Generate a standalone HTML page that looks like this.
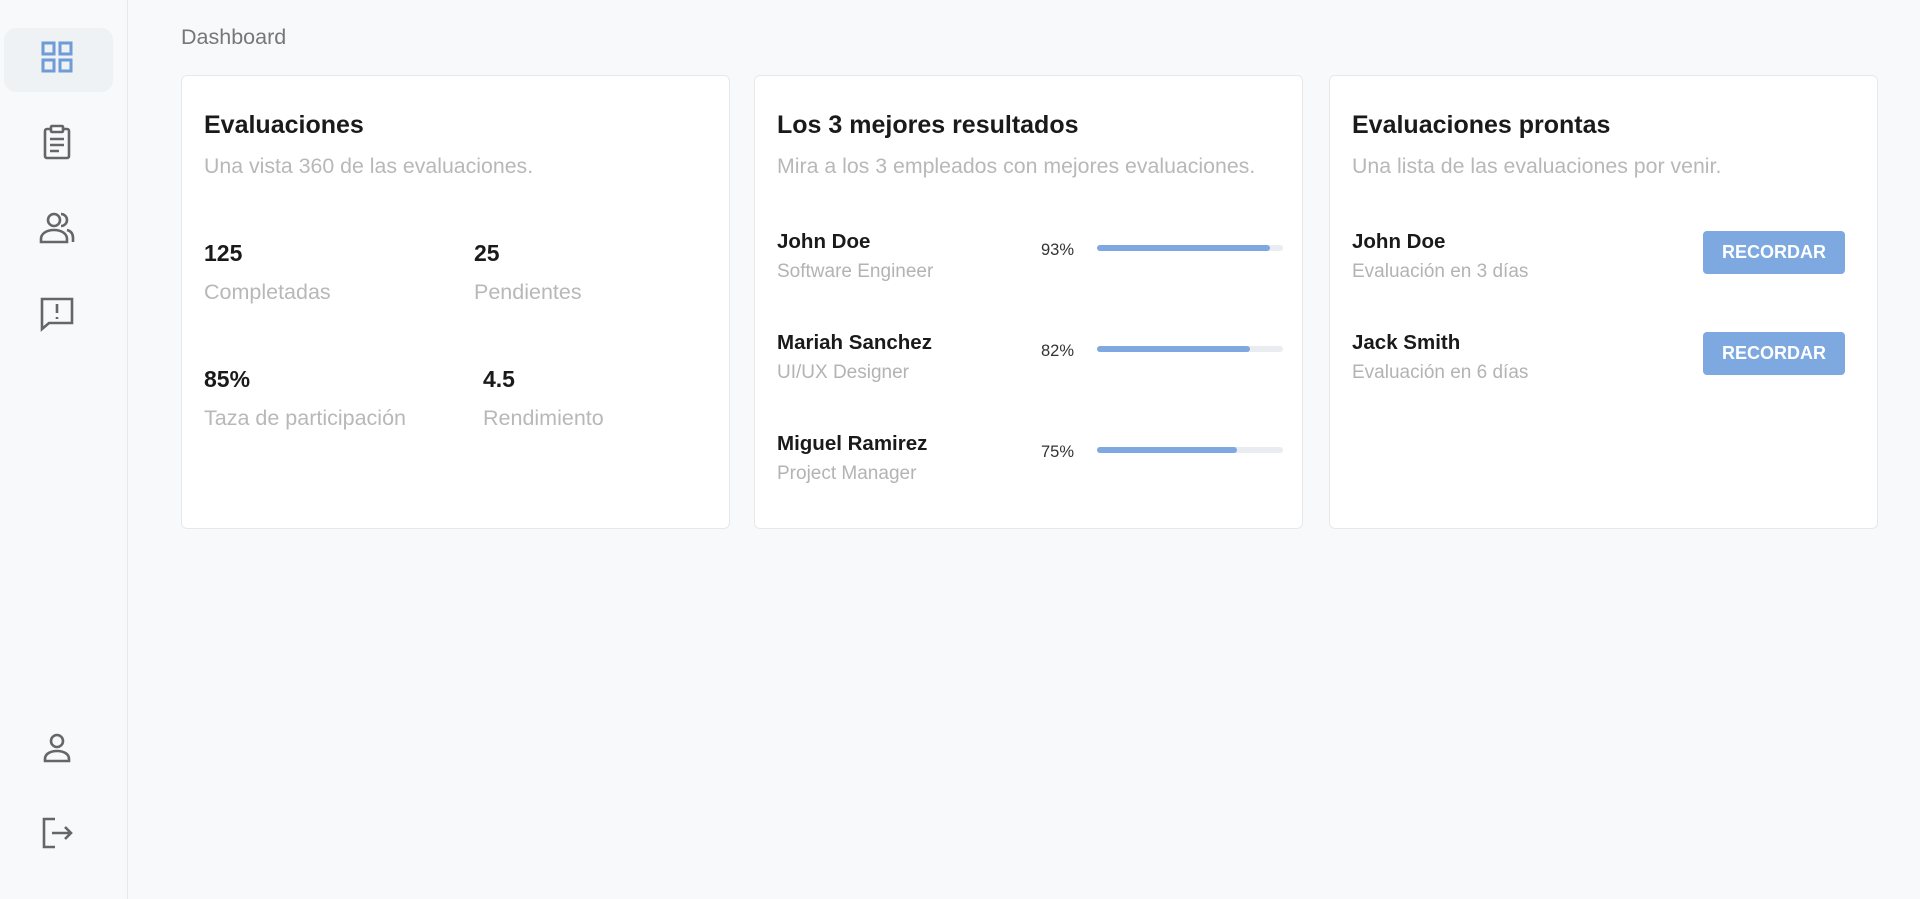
<!DOCTYPE html>
<html><head><meta charset="utf-8"><style>
*{box-sizing:border-box;margin:0;padding:0}
body{width:1920px;height:899px;background:#f7f9fa;font-family:"Liberation Sans",sans-serif;position:relative;overflow:hidden;color:#1a1a1a}
.side{position:absolute;left:0;top:0;width:128px;height:899px;background:#f7f9fa;border-right:1px solid #e6eaee}
.active{position:absolute;left:4px;top:28px;width:109px;height:64px;background:#eef2f5;border-radius:12px}
.ic{position:absolute;left:37px;width:40px;height:40px}
.crumb{position:absolute;left:181px;top:25px;font-size:21.5px;color:#777}
.card{position:absolute;top:75px;width:549px;height:454px;background:#fff;border:1px solid #e6e9ec;border-radius:6px}
.t{position:absolute;left:22px;top:35px;font-size:25px;font-weight:bold;color:#1a1a1a}
.s{position:absolute;left:22px;top:78px;font-size:21.3px;color:#b8b8b8}
.abs{position:absolute}
.num{font-size:23px;font-weight:bold}
.lab{font-size:21.5px;color:#b8b8b8}
.nm{font-size:20.5px;font-weight:bold}
.sub{font-size:19px;color:#b3b3b3}
.pct{font-size:16.5px;color:#333}
.bar{position:absolute;left:342px;width:186px;height:6px;background:#e9ecf0;border-radius:3px}
.bar i{display:block;height:6px;background:#7ea8df;border-radius:3px}
.btn{position:absolute;left:373px;width:142px;height:43px;background:#7ea8e0;border-radius:4px;color:#fff;font-weight:bold;font-size:18px;text-align:center;line-height:43px}
</style></head><body>
<div class="side">
<div class="active"></div>
<svg class="ic" style="top:37px" viewBox="0 0 40 40" fill="none" stroke="#6f9bd6" stroke-width="3"><rect x="6" y="6" width="11" height="11"/><rect x="23" y="6" width="11" height="11"/><rect x="6" y="23" width="11" height="11"/><rect x="23" y="23" width="11" height="11"/></svg>
<svg class="ic" style="top:122px" viewBox="0 0 40 40" fill="none" stroke="#666" stroke-width="2.6"><rect x="8" y="7" width="24" height="29" rx="2"/><rect x="14" y="4" width="12" height="6" rx="1" fill="#fff"/><path d="M13 17h14M13 23h14M13 29h9"/></svg>
<svg class="ic" style="top:208px" viewBox="0 0 40 40" fill="none" stroke="#666" stroke-width="2.6"><circle cx="17" cy="12" r="6"/><path d="M4 34v-3c0-5 5-9 13-9s13 4 13 9v3z"/><path d="M24 6a6 6 0 0 1 0 12M30 22c4 1 6 4 6 8v4"/></svg>
<svg class="ic" style="top:293px" viewBox="0 0 40 40" fill="none" stroke="#666" stroke-width="2.6"><path d="M5 6h30v24H12l-7 6z"/><path d="M20 11v9M20 24v2"/></svg>
<svg class="ic" style="top:728px" viewBox="0 0 40 40" fill="none" stroke="#666" stroke-width="2.6"><circle cx="20" cy="13" r="6"/><path d="M8 33v-2c0-5 5-8 12-8s12 3 12 8v2z"/></svg>
<svg class="ic" style="top:813px" viewBox="0 0 40 40" fill="none" stroke="#666" stroke-width="2.6"><path d="M18 6H7v28h11"/><path d="M15 20h19M28 14l6 6-6 6"/></svg>
</div>
<div class="crumb">Dashboard</div>

<div class="card" style="left:181px">
<div class="t">Evaluaciones</div>
<div class="s">Una vista 360 de las evaluaciones.</div>
<div class="abs num" style="left:22px;top:164px">125</div>
<div class="abs lab" style="left:22px;top:204px">Completadas</div>
<div class="abs num" style="left:292px;top:164px">25</div>
<div class="abs lab" style="left:292px;top:204px">Pendientes</div>
<div class="abs num" style="left:22px;top:290px">85%</div>
<div class="abs lab" style="left:22px;top:330px">Taza de participación</div>
<div class="abs num" style="left:301px;top:290px">4.5</div>
<div class="abs lab" style="left:301px;top:330px">Rendimiento</div>
</div>

<div class="card" style="left:754px">
<div class="t">Los 3 mejores resultados</div>
<div class="s">Mira a los 3 empleados con mejores evaluaciones.</div>
<div class="abs nm" style="left:22px;top:154px">John Doe</div>
<div class="abs sub" style="left:22px;top:185px">Software Engineer</div>
<div class="abs pct" style="left:286px;top:165px">93%</div>
<div class="bar" style="top:169px"><i style="width:93%"></i></div>
<div class="abs nm" style="left:22px;top:255px">Mariah Sanchez</div>
<div class="abs sub" style="left:22px;top:286px">UI/UX Designer</div>
<div class="abs pct" style="left:286px;top:266px">82%</div>
<div class="bar" style="top:270px"><i style="width:82%"></i></div>
<div class="abs nm" style="left:22px;top:356px">Miguel Ramirez</div>
<div class="abs sub" style="left:22px;top:387px">Project Manager</div>
<div class="abs pct" style="left:286px;top:367px">75%</div>
<div class="bar" style="top:371px"><i style="width:75%"></i></div>
</div>

<div class="card" style="left:1329px">
<div class="t">Evaluaciones prontas</div>
<div class="s">Una lista de las evaluaciones por venir.</div>
<div class="abs nm" style="left:22px;top:154px">John Doe</div>
<div class="abs sub" style="left:22px;top:185px">Evaluación en 3 días</div>
<div class="btn" style="top:155px">RECORDAR</div>
<div class="abs nm" style="left:22px;top:255px">Jack Smith</div>
<div class="abs sub" style="left:22px;top:286px">Evaluación en 6 días</div>
<div class="btn" style="top:256px">RECORDAR</div>
</div>
</body></html>
